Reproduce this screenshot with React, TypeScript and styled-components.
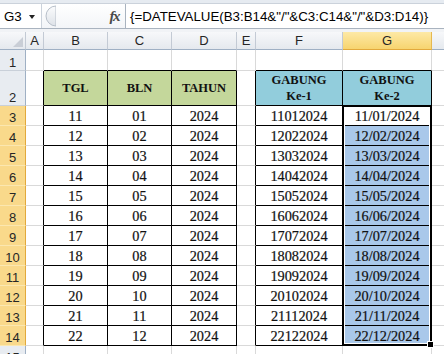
import React from 'react';
import styled, { createGlobalStyle } from 'styled-components';

const GlobalStyle = createGlobalStyle`
  html, body {
    margin: 0;
    padding: 0;
    background: #ffffff;
  }
  body {
    width: 444px;
    height: 354px;
    overflow: hidden;
  }
`;

const Window = styled.div`
  width: 444px;
  height: 354px;
  overflow: hidden;
  display: flex;
  flex-direction: column;
  background: #e6ebf1;
`;

const FormulaBar = styled.div`
  margin-top: 3px;
  height: 26px;
  box-sizing: border-box;
  display: flex;
  background: #ffffff;
  border-top: 1px solid #cbd2db;
  border-bottom: 1px solid #a9b3bf;
  font-family: 'Liberation Sans', Arial, sans-serif;
`;

const NameBox = styled.div`
  width: 41px;
  box-sizing: border-box;
  padding: 0 6px 0 4px;
  display: flex;
  align-items: center;
  justify-content: space-between;
  font-size: 13.3px;
  color: #000;
`;

const DropArrow = styled.span`
  width: 0;
  height: 0;
  border-left: 3.5px solid transparent;
  border-right: 3.5px solid transparent;
  border-top: 4px solid #222;
  margin-top: 2px;
`;

const BarMiddle = styled.div`
  width: 85px;
  box-sizing: border-box;
  display: flex;
  align-items: center;
  border-left: 1px solid #cbd2db;
  border-right: 1px solid #a9b3bf;
  background: linear-gradient(#ffffff, #f3f5f8);
`;

const FxLabel = styled.span`
  margin-left: auto;
  margin-right: 6px;
  font-family: 'Liberation Serif', 'Times New Roman', serif;
  font-style: italic;
  font-weight: bold;
  font-size: 15px;
  letter-spacing: -1.5px;
  color: #4a4a4a;
`;

const FormulaText = styled.div`
  flex: 1;
  padding-left: 4px;
  display: flex;
  align-items: center;
  white-space: nowrap;
  overflow: hidden;
  font-size: 13.3px;
  color: #000;
`;

const BarGap = styled.div`
  height: 3px;
  background: #f1f3f6;
`;

const Sheet = styled.div`
  flex: 1;
  display: grid;
  grid-template-columns: 26px 18px 64px 64px 65px 19px 87px 89px 64px;
  grid-template-rows: 18px 21px 35px repeat(12, 20px) 20px;
  background: #ffffff;
  overflow: hidden;
`;

type Pos = { $row: number; $col: number };

const ColHead = styled.div<Pos & { $active?: boolean }>`
  grid-row: ${({ $row }) => $row};
  grid-column: ${({ $col }) => $col};
  box-sizing: border-box;
  display: flex;
  align-items: center;
  justify-content: center;
  font-family: 'Liberation Sans', Arial, sans-serif;
  font-size: 13px;
  color: #262626;
  background: ${({ $active }) =>
    $active ? 'linear-gradient(#fde9a6, #f7d46f)' : 'linear-gradient(#f7f8fa, #e5e9ee)'};
  border-right: 1px solid ${({ $active }) => ($active ? '#e6b84f' : '#c3cad4')};
  border-bottom: 1px solid ${({ $active }) => ($active ? '#e2a93c' : '#9fb0c4')};
`;

const Corner = styled(ColHead)`
  align-items: flex-end;
  justify-content: flex-end;
  padding: 0 2px 2px 0;
`;

const RowHead = styled.div<Pos & { $active?: boolean }>`
  grid-row: ${({ $row }) => $row};
  grid-column: ${({ $col }) => $col};
  box-sizing: border-box;
  display: flex;
  align-items: flex-end;
  justify-content: center;
  padding-bottom: 0;
  font-family: 'Liberation Sans', Arial, sans-serif;
  font-size: 13px;
  color: #262626;
  background: ${({ $active }) => ($active ? '#f9d98b' : '#e8ecf1')};
  border-right: 1px solid ${({ $active }) => ($active ? '#e2a93c' : '#9fb0c4')};
  border-bottom: 1px solid ${({ $active }) => ($active ? '#fbe7b0' : '#c9d0d9')};
`;

const Cell = styled.div<Pos & { $fill: string; $rb: string; $bb: string; $head?: boolean }>`
  grid-row: ${({ $row }) => $row};
  grid-column: ${({ $col }) => $col};
  box-sizing: border-box;
  display: flex;
  align-items: center;
  justify-content: center;
  text-align: center;
  font-family: 'Liberation Serif', 'Times New Roman', serif;
  font-size: ${({ $head }) => ($head ? '12.5px' : '14.3px')};
  font-weight: ${({ $head }) => ($head ? 'bold' : 'normal')};
  line-height: ${({ $head }) => ($head ? '16px' : '18px')};
  color: #111;
  -webkit-text-stroke: ${({ $head }) => ($head ? '0' : '0.2px #111')};
  background: ${({ $fill }) => $fill};
  border-right: 1px solid ${({ $rb }) => $rb};
  border-bottom: 1px solid ${({ $bb }) => $bb};
  white-space: pre-line;
`;

const Selection = styled.div`
  grid-column: 8;
  grid-row: 4 / 16;
  margin: -1px 0 0 -1px;
  border: 2px solid #000;
  box-shadow: inset 0 0 0 1px #ffffff;
  position: relative;
  pointer-events: none;
`;

const FillHandle = styled.div`
  position: absolute;
  right: -4px;
  bottom: -4px;
  width: 5px;
  height: 5px;
  background: #000;
  border: 1px solid #fff;
`;

const COLS = ['A', 'B', 'C', 'D', 'E', 'F', 'G', 'H'];
const TABLE_COLS = ['B', 'C', 'D', 'F', 'G'];
const GRID = '#d9d9d9';

const pad = (n: number) => String(n).padStart(2, '0');

const rows = Array.from({ length: 12 }, (_, i) => {
  const tgl = String(11 + i);
  const bln = pad(i + 1);
  return { tgl, bln, thn: '2024', g1: `${tgl}${bln}2024`, g2: `${tgl}/${bln}/2024` };
});

const inTable = (r: number, c: string) => r >= 2 && r <= 14 && TABLE_COLS.includes(c);

const cellValue = (r: number, c: string): string => {
  if (r === 2) {
    return (
      { B: 'TGL', C: 'BLN', D: 'TAHUN', F: 'GABUNG\nKe-1', G: 'GABUNG\nKe-2' } as Record<string, string>
    )[c] || '';
  }
  if (r >= 3 && r <= 14) {
    const d = rows[r - 3];
    return ({ B: d.tgl, C: d.bln, D: d.thn, F: d.g1, G: d.g2 } as Record<string, string>)[c] || '';
  }
  return '';
};

const cellFill = (r: number, c: string) => {
  if (r === 2 && ['B', 'C', 'D'].includes(c)) return '#c4d79b';
  if (r === 2 && ['F', 'G'].includes(c)) return '#92cddc';
  if (c === 'G' && r >= 4 && r <= 14) return '#a9c8ea';
  return '#ffffff';
};

const FxGrip = () => (
  <svg width="14" height="22" viewBox="0 0 14 22">
    <defs>
      <linearGradient id="grip" x1="0" y1="0" x2="0" y2="1">
        <stop offset="0" stopColor="#fbfcfd" />
        <stop offset="1" stopColor="#dde2e8" />
      </linearGradient>
    </defs>
    <path d="M14 1 A10 10 0 0 0 14 21 Z" fill="url(#grip)" stroke="#b7bfc9" strokeWidth="1" />
  </svg>
);

const SelectAll = () => (
  <svg width="10" height="10" viewBox="0 0 10 10">
    <path d="M10 0 L10 10 L0 10 Z" fill="#c9ced6" />
  </svg>
);

export default function App() {
  const sheetRows = Array.from({ length: 15 }, (_, i) => i + 1);

  return (
    <Window>
      <GlobalStyle />
      <FormulaBar>
        <NameBox>
          G3
          <DropArrow />
        </NameBox>
        <BarMiddle>
          <FxGrip />
          <FxLabel>fx</FxLabel>
        </BarMiddle>
        <FormulaText>{'{=DATEVALUE(B3:B14&"/"&C3:C14&"/"&D3:D14)}'}</FormulaText>
      </FormulaBar>
      <BarGap />
      <Sheet>
        <Corner $row={1} $col={1}>
          <SelectAll />
        </Corner>
        {COLS.map((c, ci) => (
          <ColHead key={c} $row={1} $col={ci + 2} $active={c === 'G'}>
            {c}
          </ColHead>
        ))}
        {sheetRows.map((r) => (
          <React.Fragment key={r}>
            <RowHead $row={r + 1} $col={1} $active={r >= 3 && r <= 14}>
              {r}
            </RowHead>
            {COLS.map((c, ci) => {
              const next = COLS[ci + 1];
              const rb = inTable(r, c) || (next && inTable(r, next)) ? '#000' : GRID;
              const bb = inTable(r, c) || inTable(r + 1, c) ? '#000' : GRID;
              return (
                <Cell
                  key={c}
                  $row={r + 1}
                  $col={ci + 2}
                  $fill={cellFill(r, c)}
                  $rb={rb}
                  $bb={bb}
                  $head={r === 2}
                >
                  {cellValue(r, c)}
                </Cell>
              );
            })}
          </React.Fragment>
        ))}
        <Selection>
          <FillHandle />
        </Selection>
      </Sheet>
    </Window>
  );
}
